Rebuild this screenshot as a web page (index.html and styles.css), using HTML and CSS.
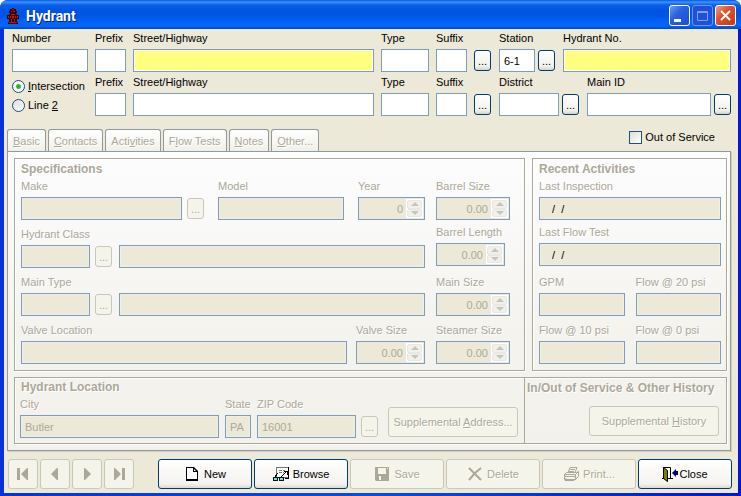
FILE: index.html
```html
<!DOCTYPE html>
<html lang="en">
<head>
<meta charset="utf-8">
<title>Hydrant</title>
<link rel="stylesheet" href="styles.css">
</head>
<body>
<div class="window">
  <header class="titlebar">
    <svg class="logo" viewBox="0 0 12 16" aria-hidden="true">
      <path fill="#3a0606" d="M5 0h2v1h2v2h1v2H9v1h1v1h2v4h-2v3h1v2H1v-2h1v-3H0V7h2V6h1V5H2V3h1V1h2z"/>
      <path fill="#c01010" d="M5 1h2v1H5zM4 3h1v1H4zM6 3h2v1H6zM4 6h4v1H4zM3 8h1v2H3zM8 8h1v2H8zM1 8h1v2H1zM10 8h1v2h-1zM5 8h2v2H5zM4 11h1v3H4zM7 11h1v3H7zM2 14h8v1H2z"/>
    </svg>
    <h1 class="caption">Hydrant</h1>
    <button class="cap-btn" type="button" aria-label="Minimize"><svg viewBox="0 0 19 19"><path fill="#fff" d="M4 13h7v3H4z"/></svg></button>
    <button class="cap-btn cap-off" type="button" aria-label="Maximize" disabled><svg viewBox="0 0 19 19"><path fill="none" stroke="#7f9cf0" d="M4.500 5.500h10v9h-10zM4 6.500h11"/></svg></button>
    <button class="cap-btn cap-close" type="button" aria-label="Close window"><svg viewBox="0 0 19 19"><path fill="none" stroke="#fff" stroke-width="2" d="M5 5l9 9M14 5l-9 9"/></svg></button>
  </header>

  <main class="client">
    <form class="address">
      <div class="field"><label for="number">Number</label><input id="number" type="text"></div>
      <div class="field"><label for="prefix1">Prefix</label><input id="prefix1" type="text"></div>
      <div class="field"><label for="street1">Street/Highway</label><input id="street1" class="required" type="text"></div>
      <div class="field"><label for="type1">Type</label><input id="type1" type="text"></div>
      <div class="field"><label for="suffix1">Suffix</label><input id="suffix1" type="text"></div>
      <button class="more" type="button">...</button>
      <div class="group">
        <div class="field w-station"><label for="station">Station</label><input id="station" type="text" value="6-1"></div>
        <button class="more" type="button">...</button>
        <div class="field grow after-more"><label for="hydrant-no">Hydrant No.</label><input id="hydrant-no" class="required" type="text"></div>
      </div>

      <div class="radios">
        <label><input type="radio" name="where" checked><span><u>I</u>ntersection</span></label>
        <label><input type="radio" name="where"><span>Line <u>2</u></span></label>
      </div>
      <div class="field"><label for="prefix2">Prefix</label><input id="prefix2" type="text"></div>
      <div class="field"><label for="street2">Street/Highway</label><input id="street2" type="text"></div>
      <div class="field"><label for="type2">Type</label><input id="type2" type="text"></div>
      <div class="field"><label for="suffix2">Suffix</label><input id="suffix2" type="text"></div>
      <button class="more" type="button">...</button>
      <div class="group">
        <div class="field w-district"><label for="district">District</label><input id="district" type="text"></div>
        <button class="more" type="button">...</button>
        <div class="field grow after-more"><label for="main-id">Main ID</label><input id="main-id" type="text"></div>
        <button class="more" type="button">...</button>
      </div>
    </form>

    <div class="tabrow">
      <div class="tabs" role="tablist">
        <button type="button" role="tab" disabled><u>B</u>asic</button>
        <button type="button" role="tab" disabled><u>C</u>ontacts</button>
        <button type="button" role="tab" disabled>Acti<u>v</u>ities</button>
        <button type="button" role="tab" disabled>F<u>l</u>ow Tests</button>
        <button type="button" role="tab" disabled><u>N</u>otes</button>
        <button type="button" role="tab" disabled><u>O</u>ther...</button>
      </div>
      <label class="check"><input type="checkbox"><span>Out of Service</span></label>
    </div>

    <section class="page">
      <div class="upper">
        <section class="panel specs">
          <h2>Specifications</h2>
          <div class="specs-cols">
            <div class="rows even">
              <div class="line">
                <div class="field grow"><label for="make">Make</label><input id="make" type="text" disabled></div>
                <button class="more" type="button" disabled>...</button>
                <div class="field w-model"><label for="model">Model</label><input id="model" type="text" disabled></div>
                <div class="field w-year"><label for="year">Year</label>
                  <div class="spin"><input id="year" type="text" value="0" disabled><span class="arrows"><button type="button" aria-label="Increase" disabled></button><button type="button" aria-label="Decrease" disabled></button></span></div></div>
              </div>
              <div class="line">
                <div class="field w-code"><label for="class">Hydrant Class</label><input id="class" type="text" disabled></div>
                <button class="more" type="button" disabled>...</button>
                <input class="grow desc" type="text" aria-label="Hydrant class description" disabled>
              </div>
              <div class="line">
                <div class="field w-code"><label for="main-type">Main Type</label><input id="main-type" type="text" disabled></div>
                <button class="more" type="button" disabled>...</button>
                <input class="grow desc" type="text" aria-label="Main type description" disabled>
              </div>
              <div class="line valve">
                <div class="field grow"><label for="valve-loc">Valve Location</label><input id="valve-loc" type="text" disabled></div>
                <div class="field w-code"><label for="valve-size">Valve Size</label>
                  <div class="spin"><input id="valve-size" type="text" value="0.00" disabled><span class="arrows"><button type="button" aria-label="Increase" disabled></button><button type="button" aria-label="Decrease" disabled></button></span></div></div>
              </div>
            </div>
            <div class="rows staggered">
              <div class="field"><label for="barrel-size">Barrel Size</label>
                <div class="spin"><input id="barrel-size" type="text" value="0.00" disabled><span class="arrows"><button type="button" aria-label="Increase" disabled></button><button type="button" aria-label="Decrease" disabled></button></span></div></div>
              <div class="field w-code"><label for="barrel-len">Barrel Length</label>
                <div class="spin"><input id="barrel-len" type="text" value="0.00" disabled><span class="arrows"><button type="button" aria-label="Increase" disabled></button><button type="button" aria-label="Decrease" disabled></button></span></div></div>
              <div class="field"><label for="main-size">Main Size</label>
                <div class="spin"><input id="main-size" type="text" value="0.00" disabled><span class="arrows"><button type="button" aria-label="Increase" disabled></button><button type="button" aria-label="Decrease" disabled></button></span></div></div>
              <div class="field"><label for="steamer">Steamer Size</label>
                <div class="spin"><input id="steamer" type="text" value="0.00" disabled><span class="arrows"><button type="button" aria-label="Increase" disabled></button><button type="button" aria-label="Decrease" disabled></button></span></div></div>
            </div>
          </div>
        </section>

        <section class="panel recent">
          <h2>Recent Activities</h2>
          <div class="rows staggered">
            <div class="field"><label for="last-insp">Last Inspection</label><input id="last-insp" class="date" type="text" value="/  /" disabled></div>
            <div class="field"><label for="last-flow">Last Flow Test</label><input id="last-flow" class="date" type="text" value="/  /" disabled></div>
            <div class="pair">
              <div class="field"><label for="gpm">GPM</label><input id="gpm" type="text" disabled></div>
              <div class="field"><label for="flow20">Flow @ 20 psi</label><input id="flow20" type="text" disabled></div>
            </div>
            <div class="pair">
              <div class="field"><label for="flow10">Flow @ 10 psi</label><input id="flow10" type="text" disabled></div>
              <div class="field"><label for="flow0">Flow @ 0 psi</label><input id="flow0" type="text" disabled></div>
            </div>
          </div>
        </section>
      </div>

      <div class="panel lower">
        <section class="location">
          <h2>Hydrant Location</h2>
          <div class="line loc-line">
            <div class="field grow"><label for="city">City</label><input id="city" type="text" value="Butler" disabled></div>
            <div class="field w-state"><label for="state">State</label><input id="state" type="text" value="PA" disabled></div>
            <div class="field w-zip"><label for="zip">ZIP Code</label><input id="zip" type="text" value="16001" disabled></div>
            <button class="more" type="button" disabled>...</button>
            <button class="btn wide" type="button" disabled><span>Supplemental <u>A</u>ddress...</span></button>
          </div>
        </section>
        <section class="history">
          <h2>In/Out of Service &amp; Other History</h2>
          <button class="btn wide" type="button" disabled><span>Supplemental <u>H</u>istory</span></button>
        </section>
      </div>
    </section>

    <footer class="toolbar">
      <div class="nav">
        <button class="btn" type="button" aria-label="First" disabled><svg viewBox="0 0 16 16"><path d="M2 2h3v12H2zM13 2v12h-1L6 8l6-6z"/></svg></button>
        <button class="btn" type="button" aria-label="Previous" disabled><svg viewBox="0 0 16 16"><path d="M11 2v12h-1L4 8l6-6z"/></svg></button>
        <button class="btn" type="button" aria-label="Next" disabled><svg viewBox="0 0 16 16"><path d="M5 2v12h1l6-6-6-6z"/></svg></button>
        <button class="btn" type="button" aria-label="Last" disabled><svg viewBox="0 0 16 16"><path d="M3 2v12h1l6-6-6-6zM11 2h3v12h-3z"/></svg></button>
      </div>
      <div class="actions">
        <button class="btn" type="button"><svg viewBox="0 0 16 16"><path fill="#000" d="M2 1h8l4 4v10H2z"/><path fill="#fff" d="M3 2h6v4h4v7H3z"/><path fill="#fff" d="M10 3l2 2h-2z"/></svg><span>New</span></button>
        <button class="btn" type="button"><svg viewBox="0 0 16 16" shape-rendering="crispEdges"><path fill="#fff" stroke="#777" d="M3.500 1.500h12v10h-12z"/><path fill="none" stroke="#000" d="M15.500 1v11.500H12"/><path fill="none" stroke="#777" d="M6 4.500h3M10 4.500h2M6 6.500h3M10 6.500h1"/><path fill="none" stroke="#000" d="M5 7l-4 5M8 11l5-5M11 5.500h3v3"/><path fill="#111" d="M0 11h5v4H0zM6 11h5v4H6zM5 11h1v1H5z"/><path fill="#7fd9e0" d="M1 12h3v2H1zM7 12h3v2H7z"/></svg><span>Browse</span></button>
        <button class="btn" type="button" disabled><svg viewBox="0 0 16 16"><path fill-rule="evenodd" d="M1 1h14v14H2l-1-1zM4 2v6h8V2zM5 10v4h2v-4zM13 2v1h1V2z"/></svg><span>Save</span></button>
        <button class="btn" type="button" disabled><svg viewBox="0 0 16 16"><path fill="none" stroke="#aca899" stroke-width="2" d="M2 2l5 5 7 7M14 2L8 7l-6 7"/></svg><span>Delete</span></button>
        <button class="btn" type="button" disabled><svg viewBox="0 0 16 16"><path fill="none" stroke="#aca899" d="M5 6.500l2-5h7l-2 5M7 3.500h5M6 5.500h5M3.500 6.500h10l2-1v5l-3 3h-11v-5zM1 8.500h11.500v5M12.500 8.500l3-3M2 10.500h10M3 12l-1 2.500h9l2-3"/></svg><span>Print...</span></button>
        <button class="btn tight" type="button"><svg viewBox="0 0 16 16"><path fill="#fff" stroke="#000" d="M1.500 1.500h7v11h-7z"/><path fill="#808000" stroke="#000" d="M1.500 1.500l4 3v11l-4-3z"/><path fill="#000" d="M0 12h2v1H0zM8 12h3v1H8z"/><path fill="#000080" d="M10 7l4-4v2h2v4h-2v2z"/></svg><span>Close</span></button>
      </div>
    </footer>
  </main>
</div>
</body>
</html>
```
FILE: styles.css
```css
* { box-sizing: border-box; }

body {
  margin: 0;
  background: #fff;
  color: #000;
  font: 11px/16px "Liberation Sans", Arial, sans-serif;
}

h1, h2 { margin: 0; }
button, input { font: inherit; color: inherit; }

.window {
  min-height: 100vh;
  display: flex;
  flex-direction: column;
  overflow: hidden;
  border-radius: 8px 8px 0 0;
  background: linear-gradient(90deg, #0831d9, #0a4be6 50%, #0019cf);
}

/* Title bar */
.titlebar {
  display: flex;
  align-items: center;
  gap: 2px;
  height: 29px;
  padding: 2px 5px 0 7px;
  background: linear-gradient(#0855dd 0, #3a93ff 2px, #0a5fe8 5px, #0054e3 10px, #0055e5 16px, #0264fb 23px, #0266ff 26px, #0047c8 29px);
}
.logo { width: 12px; height: 16px; }
.caption {
  flex: 1;
  padding-left: 5px;
  color: #fff;
  font: bold 14px/20px Roboto, "Noto Sans", sans-serif;
  text-shadow: 1px 1px 0 #0a1f7a;
}
.cap-btn {
  width: 21px;
  height: 21px;
  padding: 0;
  border: 1px solid #fff;
  border-radius: 3px;
  background: linear-gradient(135deg, #6f9bf5, #2a5fe0 40%, #1c4fd2);
}
.cap-btn svg { display: block; width: 19px; height: 19px; }
.cap-off { border-color: #6c93ee; background: #1d52d8; }
.cap-close { background: linear-gradient(135deg, #f0a088, #e0512b 40%, #c83a12); }

/* Client area */
.client {
  flex: 1;
  display: flex;
  flex-direction: column;
  margin: 0 3px 3px 4px;
  padding: 2px 7px 0 3px;
  background: #ece9d8;
}

.field { display: flex; flex-direction: column; gap: 4px; min-width: 0; }
.field label { line-height: 14px; white-space: nowrap; }
.grow { flex: 1; min-width: 0; }

input[type="text"] {
  width: 100%;
  height: 23px;
  padding: 0 4px;
  border: 1px solid #7f9db9;
  border-radius: 0;
  background: #fff;
}
input[type="text"].required { background: #ffff80; box-shadow: inset 0 0 0 1px #fff; }
input[type="text"]:disabled { background: #ece9d8; color: #aca899; box-shadow: inset 0 0 0 1px #f1efe4; }
input[type="text"].date { padding-left: 12px; color: #000; white-space: pre; }

.more {
  flex: none;
  align-self: end;
  width: 17px;
  height: 21px;
  margin-bottom: 1px;
  padding: 0;
  border: 1px solid #003c74;
  border-radius: 3px;
  background: linear-gradient(#fff, #f1f0ea 80%, #d8d3c6);
  text-align: center;
}
.more:disabled { border-color: #c9c7ba; background: #f5f4ea; color: #aca899; }

.address {
  display: grid;
  grid-template-columns: 76px 31px minmax(0, 1fr) 48px 31px 17px 233px;
  gap: 3px 7px;
  padding-left: 5px;
}
.group { display: flex; gap: 3px; padding-left: 1px; }
.after-more { margin-left: 5px; }
.w-station { width: 36px; }
.w-district { width: 60px; }

.radios { display: flex; flex-direction: column; gap: 3px; padding-top: 3px; }
.radios label, .check { display: flex; align-items: center; gap: 3px; white-space: nowrap; }
.radios input, .check input {
  appearance: none;
  flex: none;
  width: 13px;
  height: 13px;
  margin: 0;
  border: 1px solid #1c5180;
  background: linear-gradient(135deg, #dcdcd7, #fff);
}
.radios input { border-radius: 50%; }
.radios input:checked { background: radial-gradient(circle, #21a121 0, #3fbf3f 2px, #f4f4f0 3px, #fff 6px); }

/* Tabs */
.tabrow {
  display: flex;
  justify-content: space-between;
  align-items: flex-start;
  margin-top: 13px;
  padding-right: 16px;
}
.tabs { display: flex; gap: 2px; }
.tabs button {
  height: 22px;
  padding: 0 5px;
  border: 1px solid #919b9c;
  border-bottom: 0;
  border-radius: 3px 3px 0 0;
  background: linear-gradient(#fff, #f0efe8);
  color: #aca899;
  text-shadow: 1px 1px 0 #fff;
}

.page {
  display: flex;
  flex-direction: column;
  gap: 6px;
  padding: 6px 3px 6px 6px;
  border: 1px solid #919b9c;
  background: linear-gradient(#fdfdfe, #f4f3ee 60%, #f3f1ec);
  box-shadow: 1px 1px 0 #d0cebf;
  color: #aca899;
  text-shadow: 1px 1px 0 #fff;
}
.upper { display: flex; gap: 7px; }
.panel { border: 1px solid #aca899; box-shadow: 1px 1px 0 #fff, inset 1px 1px 0 #fff; }
.panel h2 { font-size: 12px; line-height: 20px; white-space: nowrap; }
.specs { flex: 1; min-width: 0; padding: 0 14px 6px 6px; }
.recent { width: 195px; padding: 0 5px 6px 6px; }
.specs-cols { display: grid; grid-template-columns: minmax(0, 1fr) 74px; gap: 11px; }
.rows { display: grid; }
.even { grid-template-rows: 48px 48px 48px 41px; }
.staggered { grid-template-rows: 46px 50px 48px 41px; }
.staggered .field, .pair { height: 41px; }
.line { display: flex; gap: 5px; height: 41px; }
.line .more + .field { margin-left: 9px; }
.line .w-year { margin-left: 9px; }
.line .desc { width: auto; align-self: end; margin-left: 2px; }
.valve { gap: 9px; }
.w-model { width: 126px; }
.w-year { width: 67px; }
.w-code { width: 69px; }
.pair { display: grid; grid-template-columns: 1fr 1fr; gap: 11px; }

.spin {
  display: flex;
  height: 23px;
  padding: 1px;
  border: 1px solid #7f9db9;
  background: #ece9d8;
}
.spin input[type="text"] {
  flex: 1;
  min-width: 0;
  height: 19px;
  padding: 0 3px;
  border: 0;
  box-shadow: none;
  text-align: right;
}
.arrows { display: flex; flex-direction: column; width: 17px; padding: 1px; background: #fff; }
.arrows button {
  flex: 1;
  display: flex;
  align-items: center;
  justify-content: center;
  padding: 0;
  border: 1px solid #e8e7e1;
  border-radius: 2px;
  background: #f1f0ea;
}
.arrows button::before {
  content: "";
  border: 4px solid transparent;
  border-top: 0;
  border-bottom: 4px solid #c6c5bd;
}
.arrows button + button::before { border-bottom: 0; border-top: 4px solid #c6c5bd; }

.lower { display: flex; }
.location { flex: 1; min-width: 0; padding: 0 6px 5px 5px; border-right: 1px solid #aca899; }
.location h2 { padding-left: 1px; line-height: 19px; }
.loc-line { gap: 6px; }
.loc-line .btn { align-self: end; margin: 0 0 1px 4px; }
.loc-line .more { margin-left: -1px; }
.w-state { width: 26px; }
.w-zip { width: 99px; }
.history { display: flex; flex-direction: column; width: 201px; padding: 0 7px 0 2px; }
.history .btn { align-self: flex-end; margin-top: 8px; }

/* Push buttons */
.btn {
  display: flex;
  align-items: center;
  justify-content: center;
  gap: 4px;
  height: 30px;
  padding: 0;
  border: 1px solid #003c74;
  border-radius: 3px;
  background: linear-gradient(#fff, #f4f3ee 85%, #dcd8cb);
  white-space: nowrap;
}
.btn:disabled {
  border-color: #c9c7ba;
  background: #f5f4ea;
  color: #aca899;
  fill: #aca899;
  text-shadow: 1px 1px 0 #fff;
}
.btn svg { width: 16px; height: 16px; }
.wide { width: 130px; }

.toolbar { display: flex; justify-content: space-between; gap: 20px; margin: 8px 0 3px; padding-left: 1px; }
.nav, .actions { display: flex; gap: 2px; }
.nav .btn { width: 30px; }
.actions { flex: 1; max-width: 574px; margin-right: -1px; }
.actions .btn { flex: 1; min-width: 0; }
.actions .tight { gap: 1px; }
```
